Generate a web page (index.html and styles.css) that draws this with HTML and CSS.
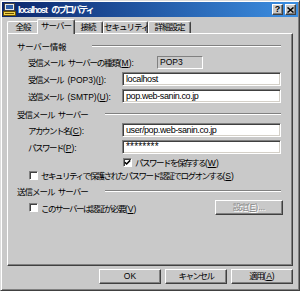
FILE: index.html
```html
<!DOCTYPE html>
<html lang="ja">
<head>
    <meta charset="UTF-8">
    <title>localhost のプロパティ</title>
    <link rel="stylesheet" href="styles.css">
</head>
<body>
    <div class="dialog">
        <div class="titlebar">
            <svg class="title-icon" width="13" height="13" viewBox="0 0 13 13">
                <rect x="1.5" y="0.5" width="10" height="7" fill="#e8e8e8" stroke="#404040"/>
                <rect x="3" y="2" width="7" height="4" fill="#2f5fa8"/>
                <rect x="0.5" y="8.5" width="12" height="4" fill="#f2d24a" stroke="#6a5200"/>
                <path d="M2 10.5h9" stroke="#6a5200"/>
            </svg>
            <span class="title-text"><span class="title-en">localhost</span> のプロパティ</span>
            <div class="caption-buttons">
                <div class="caption-btn">?</div>
                <div class="caption-btn">
                    <svg width="7" height="6" viewBox="0 0 7 6"><path d="M0.5 0.5L6.5 5.5M6.5 0.5L0.5 5.5" stroke="#000" stroke-width="1.5"/></svg>
                </div>
            </div>
        </div>

        <div class="tabs">
            <div class="tab tab-general">全般</div>
            <div class="tab tab-server active">サーバー</div>
            <div class="tab tab-conn">接続</div>
            <div class="tab tab-security">セキュリティ</div>
            <div class="tab tab-advanced">詳細設定</div>
        </div>

        <div class="panel">
            <div class="section">
                <div class="group-title"><span class="caption short">サーバー情報</span><span class="rule"></span></div>
                <div class="row">
                    <span class="label wide">受信メール サーバーの種類<span class="en">(<u>M</u>):</span></span>
                    <span class="static-box">POP3</span>
                </div>
                <div class="row">
                    <span class="label">受信メール<span class="en"> (POP3)(<u>I</u>):</span></span>
                    <span class="textbox">localhost</span>
                </div>
                <div class="row">
                    <span class="label">送信メール<span class="en"> (SMTP)(<u>U</u>):</span></span>
                    <span class="textbox">pop.web-sanin.co.jp</span>
                </div>
            </div>

            <div class="section">
                <div class="group-title"><span class="caption">受信メール サーバー</span><span class="rule"></span></div>
                <div class="row">
                    <span class="label">アカウント名<span class="en">(<u>C</u>):</span></span>
                    <span class="textbox">user/pop.web-sanin.co.jp</span>
                </div>
                <div class="row">
                    <span class="label">パスワード<span class="en">(<u>P</u>):</span></span>
                    <span class="textbox password">********</span>
                </div>
                <div class="check-row indent">
                    <span class="checkbox"><svg width="7" height="7" viewBox="0 0 7 7"><path d="M0.8 3.2L2.6 5L6.2 1.4" fill="none" stroke="#000" stroke-width="1.5"/></svg></span>
                    <span>パスワードを保存する<span class="en">(<u>W</u>)</span></span>
                </div>
                <div class="check-row">
                    <span class="checkbox"></span>
                    <span>セキュリティで保護されたパスワード認証でログオンする<span class="en">(<u>S</u>)</span></span>
                </div>
            </div>

            <div class="section last">
                <div class="group-title"><span class="caption">送信メール サーバー</span><span class="rule"></span></div>
                <div class="button-row">
                    <div class="check-row">
                        <span class="checkbox"></span>
                        <span>このサーバーは認証が必要<span class="en">(<u>V</u>)</span></span>
                    </div>
                    <div class="button disabled">設定<span class="en">(<u>E</u>)...</span></div>
                </div>
            </div>
        </div>

        <div class="buttons">
            <div class="button"><span class="en">OK</span></div>
            <div class="button">キャンセル</div>
            <div class="button">適用<span class="en">(<u>A</u>)</span></div>
        </div>
    </div>
</body>
</html>
```

FILE: styles.css
```css
body {
    margin: 0;
    background: #c9c9c9;
    font-family: "Liberation Sans", "Noto Sans CJK JP", sans-serif;
    font-size: 8.5px;
    letter-spacing: -1.5px;
    word-spacing: 2px;
    color: #000;
}
.en {
    letter-spacing: 0;
}
u {
    text-underline-offset: 1px;
}
.dialog {
    box-sizing: border-box;
    width: 300px;
    height: 291px;
    padding: 1px;
    border: 1px solid;
    border-color: #dcdcdc #404040 #404040 #dcdcdc;
    box-shadow: inset 1px 1px #fff, inset -1px -1px #808080;
    display: flex;
    flex-direction: column;
}
.titlebar {
    height: 15px;
    flex: none;
    display: flex;
    align-items: center;
    padding: 0 2px 0 1px;
    background: linear-gradient(to right, #0a246a, #3c8fe2);
    color: #fff;
    font-size: 9px;
    font-weight: bold;
}
.title-icon {
    margin-right: 2px;
}
.title-text {
    white-space: pre;
    letter-spacing: -2px;
    word-spacing: 4px;
}
.title-en {
    letter-spacing: -1.2px;
}
.caption-buttons {
    margin-left: auto;
    display: flex;
    gap: 2px;
}
.caption-btn {
    box-sizing: border-box;
    width: 11px;
    height: 11px;
    background: #c9c9c9;
    border: 1px solid;
    border-color: #fff #404040 #404040 #fff;
    box-shadow: inset -1px -1px #808080;
    display: flex;
    align-items: center;
    justify-content: center;
    color: #000;
    font-size: 9px;
    font-weight: bold;
    line-height: 9px;
    letter-spacing: 0;
}

/* tabs */
.tabs {
    height: 16px;
    flex: none;
    display: flex;
    align-items: flex-end;
    margin-left: 5px;
}
.tab {
    box-sizing: border-box;
    height: 12px;
    border: 1px solid;
    border-color: #fff #404040 transparent #fff;
    border-bottom: none;
    border-radius: 2px 2px 0 0;
    box-shadow: inset -1px 0 #808080;
    text-align: center;
    line-height: 11px;
    letter-spacing: -1px;
    white-space: nowrap;
}
.tab.active {
    position: relative;
    z-index: 1;
    height: 15px;
    margin: 0 -2px -1px;
    background: #c9c9c9;
    line-height: 12px;
}
.tab-general { width: 32px; }
.tab-server { width: 38px; }
.tab-conn { width: 30px; }
.tab-security { width: 45px; }
.tab-advanced { width: 43px; }

/* panel */
.panel {
    box-sizing: border-box;
    height: 233px;
    flex: none;
    margin: 0 5px;
    padding: 6px 11px 0 9px;
    border: 1px solid;
    border-color: #fff #404040 #404040 #fff;
    box-shadow: inset -1px -1px #808080;
}
.section {
    display: flex;
    flex-direction: column;
    gap: 3px;
    margin-bottom: 5px;
}
.section.last {
    margin-top: 2px;
}
.group-title {
    height: 12px;
    display: flex;
    align-items: center;
}
.caption {
    width: 88px;
    flex: none;
    white-space: pre;
    letter-spacing: -1px;
}
.caption.short {
    width: 75px;
    letter-spacing: -0.3px;
}
.rule {
    flex: 1;
    border-top: 1px solid #808080;
    border-bottom: 1px solid #fff;
}
.row {
    height: 14px;
    display: flex;
    align-items: center;
    padding-left: 11px;
}
.label {
    width: 94px;
    flex: none;
    white-space: pre;
}
.label.wide {
    width: 129px;
    letter-spacing: -1.2px;
}
.static-box {
    box-sizing: border-box;
    width: 46px;
    height: 13px;
    padding-left: 2px;
    border: 1px solid;
    border-color: #808080 #fff #fff #808080;
    line-height: 11px;
    letter-spacing: 0;
}
.textbox {
    box-sizing: border-box;
    flex: 1;
    height: 14px;
    padding-left: 3px;
    background: #fff;
    border: 1px solid;
    border-color: #808080 #fff #fff #808080;
    box-shadow: inset 1px 1px #404040, inset -1px -1px #d4d0c8;
    font-size: 9px;
    line-height: 12px;
    letter-spacing: -0.4px;
    word-spacing: 0;
    white-space: nowrap;
}
.textbox.password {
    font-size: 10px;
    letter-spacing: 0.2px;
}
.check-row {
    height: 10px;
    display: flex;
    align-items: center;
    gap: 3px;
    padding-left: 12px;
    white-space: nowrap;
}
.check-row.indent {
    padding-left: 106px;
}
.checkbox {
    box-sizing: border-box;
    width: 9px;
    height: 9px;
    flex: none;
    background: #fff;
    border: 1px solid;
    border-color: #808080 #fff #fff #808080;
    box-shadow: inset 1px 1px #404040;
    display: flex;
    align-items: center;
    justify-content: center;
}
.button-row {
    display: flex;
    align-items: center;
    justify-content: space-between;
    margin-right: -2px;
}

/* buttons */
.button {
    box-sizing: border-box;
    width: 62px;
    height: 15px;
    border: 1px solid;
    border-color: #fff #404040 #404040 #fff;
    box-shadow: inset -1px -1px #808080;
    text-align: center;
    line-height: 13px;
}
.button.disabled {
    width: 68px;
    color: #8a8a8a;
    text-shadow: 1px 1px #fff;
}
.buttons {
    display: flex;
    justify-content: flex-end;
    gap: 4px;
    margin: 3px 5px 0 0;
}
```
